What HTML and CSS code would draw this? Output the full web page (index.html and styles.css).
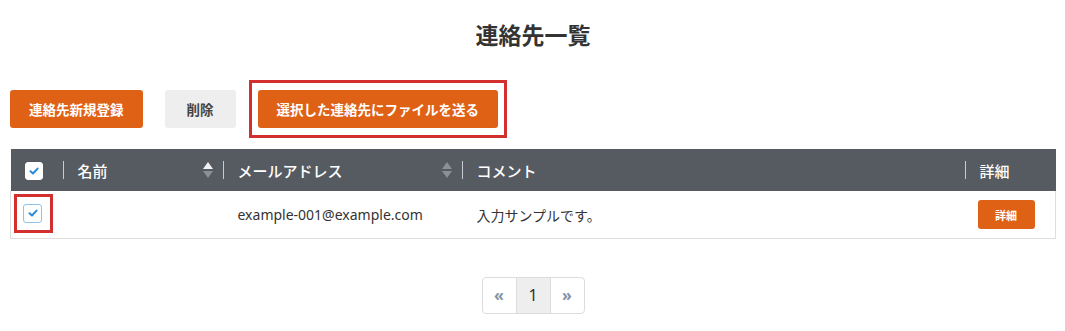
FILE: index.html
```html
<!DOCTYPE html>
<html lang="ja">
<head>
    <meta charset="UTF-8">
    <meta name="viewport" content="width=device-width, initial-scale=1.0">
    <title>連絡先一覧</title>
    <link rel="stylesheet" href="styles.css">
</head>
<body>
    <div class="page">
        <h1>連絡先一覧</h1>

        <div class="toolbar">
            <button class="btn btn-primary">連絡先新規登録</button>
            <button class="btn btn-light">削除</button>
            <span class="mark mark-toolbar">
                <button class="btn btn-primary">選択した連絡先にファイルを送る</button>
            </span>
        </div>

        <table class="contacts">
            <colgroup>
                <col class="col-check">
                <col class="col-name">
                <col class="col-mail">
                <col class="col-comment">
                <col class="col-detail">
            </colgroup>
            <thead>
                <tr>
                    <th class="cell-check">
                        <span class="checkbox checkbox-head">
                            <svg viewBox="0 0 12 12" width="12" height="12"><path d="M2.5 6.2 L5 8.5 L9.6 3.6" fill="none" stroke="#2b8ad8" stroke-width="2" stroke-linecap="round" stroke-linejoin="round"/></svg>
                        </span>
                    </th>
                    <th class="sortable">名前<span class="sort sort-asc"></span></th>
                    <th class="sortable">メールアドレス<span class="sort"></span></th>
                    <th>コメント</th>
                    <th>詳細</th>
                </tr>
            </thead>
            <tbody>
                <tr>
                    <td class="cell-check">
                        <span class="mark mark-row">
                            <span class="checkbox">
                                <svg viewBox="0 0 12 12" width="12" height="12"><path d="M2.5 6.2 L5 8.5 L9.6 3.6" fill="none" stroke="#2b8ad8" stroke-width="2" stroke-linecap="round" stroke-linejoin="round"/></svg>
                            </span>
                        </span>
                    </td>
                    <td></td>
                    <td>example-001@example.com</td>
                    <td>入力サンプルです。</td>
                    <td><button class="btn btn-primary btn-small">詳細</button></td>
                </tr>
            </tbody>
        </table>

        <ul class="pager">
            <li class="pager-arrow">&laquo;</li>
            <li class="pager-current">1</li>
            <li class="pager-arrow">&raquo;</li>
        </ul>
    </div>
</body>
</html>
```

FILE: styles.css
```css
body { margin: 0; font-family: "Noto Sans", "Noto Sans CJK JP", sans-serif; color: #333; background: #fff; }
.page { padding: 0 9px 0 10px; }
h1 { margin: 18px 0 0; font-size: 23px; line-height: 34px; font-weight: bold; text-align: center; color: #333; }

.toolbar { display: flex; align-items: center; gap: 22px; margin-top: 28px; }
.btn {
    font-family: inherit;
    font-size: 13.5px;
    font-weight: bold;
    height: 38px;
    padding: 0 19px;
    border: none;
    border-radius: 3px;
    cursor: pointer;
}
.btn-primary { background-color: #df6116; color: #fff; }
.btn-light { background-color: #eeeeee; color: #444; min-width: 71px; }
.btn-small { height: 29px; width: 57px; padding: 0; font-size: 11px; }

/* 注記用の赤枠 */
.mark { display: inline-flex; border: 3px solid #d2302f; }
.mark-toolbar { padding: 7px 6px; margin-left: -9px; }
.mark-row { display: flex; width: max-content; padding: 7px 8px 7px 6px; margin-bottom: 3px; }

.contacts { width: 100%; margin-top: 11px; border-collapse: collapse; table-layout: fixed; }
.col-check { width: 52px; }
.col-name { width: 160px; }
.col-mail { width: 239px; }
.col-detail { width: 91px; }
.contacts th {
    position: relative;
    height: 42px;
    padding: 0 0 0 15px;
    background-color: #565b61;
    color: #fff;
    font-size: 15px;
    font-weight: 500;
    text-align: left;
}
.contacts th + th::before {
    content: "";
    position: absolute;
    left: 0;
    top: 12px;
    width: 1px;
    height: 18px;
    background-color: #c9cbce;
}
.contacts th.cell-check { padding-left: 14px; }
.contacts td {
    height: 47px;
    padding: 0 0 0 15px;
    font-size: 14px;
    border-bottom: 1px solid #dedede;
    vertical-align: middle;
}
.contacts td:first-child { border-left: 1px solid #dedede; padding-left: 3px; }
.contacts td:last-child { border-right: 1px solid #dedede; padding-left: 13px; }

.checkbox {
    display: inline-flex;
    align-items: center;
    justify-content: center;
    width: 19px;
    height: 19px;
    box-sizing: border-box;
    border: 1px solid #8dc3ec;
    border-radius: 3px;
    background: #fff;
    vertical-align: middle;
}
.checkbox-head { width: 18px; height: 18px; border-color: #fff; }

.sort { position: absolute; right: 10px; top: 13px; width: 10px; height: 16px; }
.sort::before, .sort::after {
    content: "";
    position: absolute;
    left: 0;
    border-left: 5px solid transparent;
    border-right: 5px solid transparent;
}
.sort::before { top: 0; border-bottom: 7px solid #8c9095; }
.sort::after { bottom: 0; border-top: 7px solid #8c9095; }
.sort-asc::before { border-bottom-color: #f2f2f2; }

.pager {
    display: flex;
    width: max-content;
    margin: 38px auto 0;
    padding: 0;
    list-style: none;
    border: 1px solid #dcdcdc;
    border-radius: 4px;
}
.pager li {
    width: 33px;
    height: 35px;
    line-height: 35px;
    text-align: center;
    font-size: 16px;
}
.pager li + li { border-left: 1px solid #dcdcdc; }
.pager-arrow { color: #8593a6; font-size: 16px; font-weight: bold; }
.pager-current { background-color: #eeeeee; color: #333; }
```
